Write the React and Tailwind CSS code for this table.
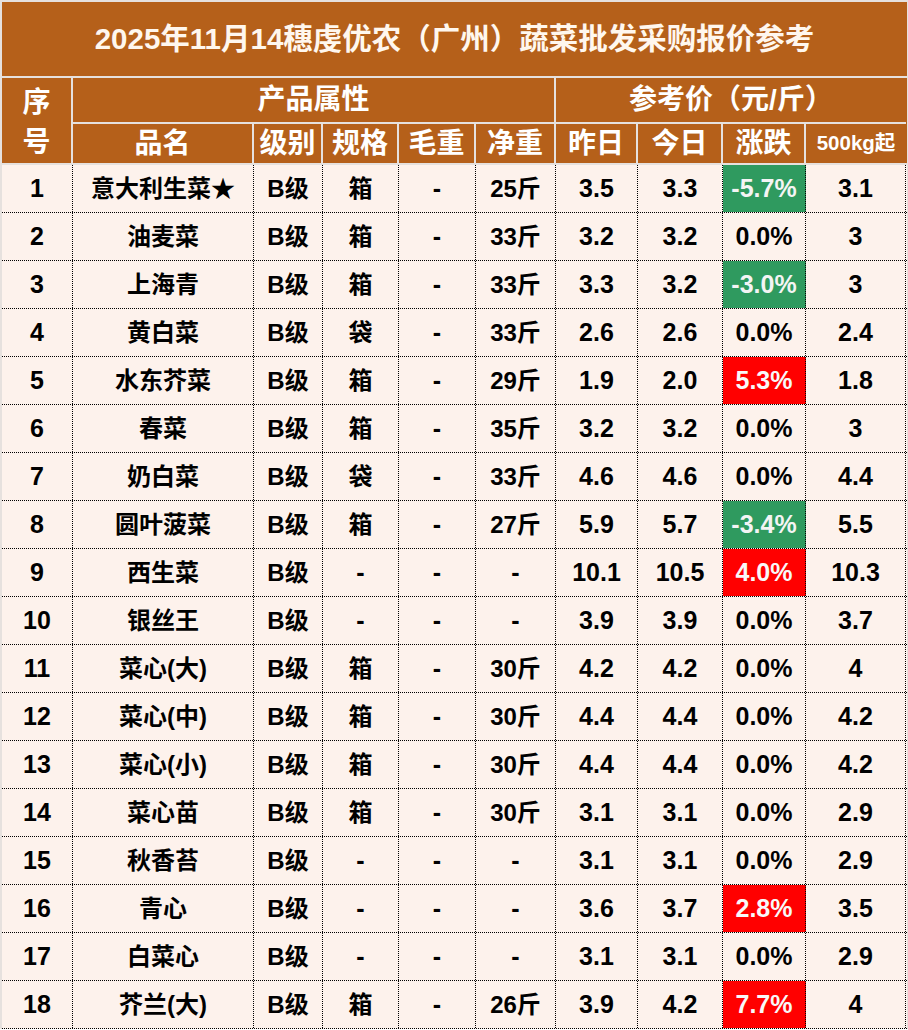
const FONT = { fontFamily: '"Liberation Sans", "Noto Sans CJK SC", sans-serif' }

// column widths (incl. right border)
const COLS = ['w-[71px]', 'w-[181px]', 'w-[69px]', 'w-[76px]', 'w-[77px]', 'w-[80px]', 'w-[82px]', 'w-[85px]', 'w-[83px]', 'w-[100px]']

const rows = [
  ['1', '意大利生菜★', 'B级', '箱', '-', '25斤', '3.5', '3.3', '-5.7%', '3.1'],
  ['2', '油麦菜', 'B级', '箱', '-', '33斤', '3.2', '3.2', '0.0%', '3'],
  ['3', '上海青', 'B级', '箱', '-', '33斤', '3.3', '3.2', '-3.0%', '3'],
  ['4', '黄白菜', 'B级', '袋', '-', '33斤', '2.6', '2.6', '0.0%', '2.4'],
  ['5', '水东芥菜', 'B级', '箱', '-', '29斤', '1.9', '2.0', '5.3%', '1.8'],
  ['6', '春菜', 'B级', '箱', '-', '35斤', '3.2', '3.2', '0.0%', '3'],
  ['7', '奶白菜', 'B级', '袋', '-', '33斤', '4.6', '4.6', '0.0%', '4.4'],
  ['8', '圆叶菠菜', 'B级', '箱', '-', '27斤', '5.9', '5.7', '-3.4%', '5.5'],
  ['9', '西生菜', 'B级', '-', '-', '-', '10.1', '10.5', '4.0%', '10.3'],
  ['10', '银丝王', 'B级', '-', '-', '-', '3.9', '3.9', '0.0%', '3.7'],
  ['11', '菜心(大)', 'B级', '箱', '-', '30斤', '4.2', '4.2', '0.0%', '4'],
  ['12', '菜心(中)', 'B级', '箱', '-', '30斤', '4.4', '4.4', '0.0%', '4.2'],
  ['13', '菜心(小)', 'B级', '箱', '-', '30斤', '4.4', '4.4', '0.0%', '4.2'],
  ['14', '菜心苗', 'B级', '箱', '-', '30斤', '3.1', '3.1', '0.0%', '2.9'],
  ['15', '秋香苔', 'B级', '-', '-', '-', '3.1', '3.1', '0.0%', '2.9'],
  ['16', '青心', 'B级', '-', '-', '-', '3.6', '3.7', '2.8%', '3.5'],
  ['17', '白菜心', 'B级', '-', '-', '-', '3.1', '3.1', '0.0%', '2.9'],
  ['18', '芥兰(大)', 'B级', '箱', '-', '26斤', '3.9', '4.2', '7.7%', '4'],
]

const subHeads = ['品名', '级别', '规格', '毛重', '净重', '昨日', '今日', '涨跌']

function changeClass(v) {
  if (v.startsWith('-')) return 'bg-[#2f9a5f] text-[#f4f4f4]'
  if (v === '0.0%') return 'bg-[#fdf2ec] text-black'
  return 'bg-[#ff0000] text-[#f8f8f8]'
}

export default function App() {
  return (
    <div className="w-[908px] bg-[#e6e1de] pt-[2px] pl-[2px] pr-[1px] font-bold" style={FONT}>
      {/* Title */}
      <div className="h-[76px] flex items-center justify-center bg-[#b5601a] text-[#fff7ee] text-[29.5px] border-b-2 border-[#e6e1de]">
        2025年11月14穗虔优农（广州）蔬菜批发采购报价参考
      </div>

      {/* Header */}
      <div className="flex h-[87px] text-white bg-[#b5601a] border-b-2 border-[#e6e1de]">
        <div className={`${COLS[0]} border-r-2 border-[#e6e1de] flex flex-col items-center justify-center pt-[4px] text-[28px] leading-[40px]`}>
          <span>序</span>
          <span>号</span>
        </div>
        <div className="flex flex-col">
          <div className="flex h-[46px] border-b-2 border-[#e6e1de] text-[28px]">
            <div className="w-[483px] border-r-2 border-[#e6e1de] flex items-center justify-center">产品属性</div>
            <div className="w-[350px] flex items-center justify-center">参考价（元/斤）</div>
          </div>
          <div className="flex h-[39px] text-[28px]">
            {subHeads.map((h, i) => (
              <div key={h} className={`${COLS[i + 1]} border-r-2 border-[#e6e1de] flex items-center justify-center`}>
                {h}
              </div>
            ))}
            <div className={`${COLS[9]} flex items-center justify-center text-[20.5px]`}>500kg起</div>
          </div>
        </div>
      </div>

      {/* Data rows */}
      {rows.map((r) => (
        <div key={r[0]} className="flex h-[48px] border-b border-dotted border-black bg-[#fdf2ec] text-black">
          {r.map((c, i) => (
            <div
              key={i}
              className={[
                COLS[i],
                'flex items-center justify-center border-r border-dotted border-black',
                /^[\x00-\x7f]+$/.test(c) ? 'text-[25px]' : 'text-[24px]',
                i === 8 ? changeClass(c) : '',
              ].join(' ')}
            >
              {c}
            </div>
          ))}
        </div>
      ))}
    </div>
  )
}
